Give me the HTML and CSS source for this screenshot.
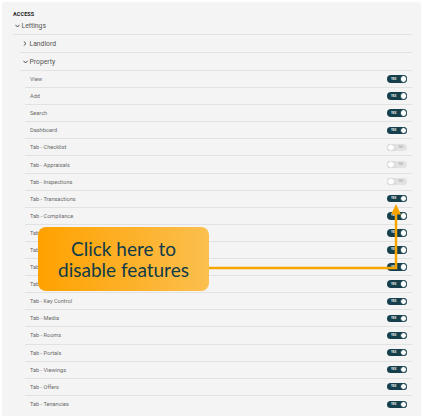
FILE: index.html
```html
<!DOCTYPE html>
<html>
<head>
<meta charset="utf-8">
<link rel="stylesheet" href="styles.css">
</head>
<body>
<div class="panel">
  <div class="section-title">ACCESS</div>
  <div class="group-row level0">
    <svg class="chev" viewBox="0 0 6 4"><polyline points="0.5,0.5 3,3.2 5.5,0.5"/></svg>
    <span>Lettings</span>
  </div>
  <div class="children">
    <div class="group-row level1">
      <svg class="chev right" viewBox="0 0 4 6"><polyline points="0.5,0.5 3.2,3 0.5,5.5"/></svg>
      <span>Landlord</span>
    </div>
    <div class="group-row level1">
      <svg class="chev" viewBox="0 0 6 4"><polyline points="0.5,0.5 3,3.2 5.5,0.5"/></svg>
      <span>Property</span>
    </div>
    <div class="items">
      <div class="item"><span>View</span><span class="toggle on"><i>YES</i><b></b></span></div>
      <div class="item"><span>Add</span><span class="toggle on"><i>YES</i><b></b></span></div>
      <div class="item"><span>Search</span><span class="toggle on"><i>YES</i><b></b></span></div>
      <div class="item"><span>Dashboard</span><span class="toggle on"><i>YES</i><b></b></span></div>
      <div class="item"><span>Tab - Checklist</span><span class="toggle off"><b></b><i>NO</i></span></div>
      <div class="item"><span>Tab - Appraisals</span><span class="toggle off"><b></b><i>NO</i></span></div>
      <div class="item"><span>Tab - Inspections</span><span class="toggle off"><b></b><i>NO</i></span></div>
      <div class="item"><span>Tab - Transactions</span><span class="toggle on"><i>YES</i><b></b></span></div>
      <div class="item"><span>Tab - Compliance</span><span class="toggle on"><i>YES</i><b></b></span></div>
      <div class="item"><span>Tab - Marketing</span><span class="toggle on"><i>YES</i><b></b></span></div>
      <div class="item"><span>Tab - Documents</span><span class="toggle on"><i>YES</i><b></b></span></div>
      <div class="item"><span>Tab - Applicants</span><span class="toggle on"><i>YES</i><b></b></span></div>
      <div class="item"><span>Tab - Valuations</span><span class="toggle on"><i>YES</i><b></b></span></div>
      <div class="item"><span>Tab - Key Control</span><span class="toggle on"><i>YES</i><b></b></span></div>
      <div class="item"><span>Tab - Media</span><span class="toggle on"><i>YES</i><b></b></span></div>
      <div class="item"><span>Tab - Rooms</span><span class="toggle on"><i>YES</i><b></b></span></div>
      <div class="item"><span>Tab - Portals</span><span class="toggle on"><i>YES</i><b></b></span></div>
      <div class="item"><span>Tab - Viewings</span><span class="toggle on"><i>YES</i><b></b></span></div>
      <div class="item"><span>Tab - Offers</span><span class="toggle on"><i>YES</i><b></b></span></div>
      <div class="item"><span>Tab - Tenancies</span><span class="toggle on"><i>YES</i><b></b></span></div>
    </div>
  </div>
</div>

<svg class="arrow" viewBox="0 0 425 416" width="425" height="416">
  <polyline points="208,268 396,268 396,212" />
  <polygon points="391,214.5 401,214.5 396,204" />
</svg>

<div class="callout">Click here to<br>disable features</div>
</body>
</html>
```

FILE: styles.css
```css
html, body {
  margin: 0;
  padding: 0;
  background: #ffffff;
  width: 425px;
  height: 416px;
  overflow: hidden;
  font-family: Roboto, "Liberation Sans", sans-serif;
}

.panel {
  margin: 3px 0 0 3px;
  width: 417px;
  height: 420px;
  box-sizing: border-box;
  background: #f4f4f4;
  padding: 8px 8px 0 10px;
  box-shadow: 0 0 2px rgba(0, 0, 0, 0.12);
}

.section-title {
  font-size: 5.5px;
  font-weight: 700;
  color: #222;
  line-height: 6px;
  height: 6px;
  letter-spacing: 0.1px;
}

.group-row {
  display: flex;
  align-items: center;
  gap: 1.5px;
  height: 18px;
  box-sizing: border-box;
  border-bottom: 1px solid #e2e2e2;
  font-size: 6.8px;
  color: #555;
}

.group-row.level0 {
  padding-left: 2px;
}

.children {
  margin-left: 7px;
}

.group-row.level1 {
  padding-left: 3px;
}

.chev {
  width: 5px;
  height: 4px;
  fill: none;
  stroke: #333;
  stroke-width: 1;
}

.chev.right {
  width: 4px;
  height: 5px;
  margin-right: 1px;
}

.items {
  margin-left: 5px;
}

.item {
  display: flex;
  align-items: center;
  justify-content: space-between;
  height: 17.1px;
  box-sizing: border-box;
  border-bottom: 1px solid #e2e2e2;
  padding: 0 5px 0 5px;
  font-size: 5.6px;
  color: #6a6a6a;
}

.item:last-child {
  border-bottom: none;
}

.toggle {
  display: flex;
  align-items: center;
  justify-content: space-between;
  width: 20px;
  height: 7.5px;
  border-radius: 4px;
  box-sizing: border-box;
}

.toggle i {
  font-style: normal;
  font-size: 3px;
  font-weight: 700;
  line-height: 3px;
}

.toggle b {
  display: block;
  width: 7.5px;
  height: 7.5px;
  border-radius: 50%;
  background: #fff;
  box-sizing: border-box;
}

.toggle.on {
  background: #143f4b;
  padding-left: 4px;
}

.toggle.on i {
  color: #e8eef0;
}

.toggle.on b {
  border: 1px solid #143f4b;
}

.toggle.off {
  background: #e2e2e2;
  padding-right: 4px;
}

.toggle.off i {
  color: #b5b5b5;
}

.toggle.off b {
  border: 0.6px solid #e0e0e0;
  box-shadow: 0 0 1px rgba(0,0,0,0.15);
}

.arrow {
  position: absolute;
  left: 0;
  top: 0;
  pointer-events: none;
}

.arrow polyline {
  fill: none;
  stroke: #f7a600;
  stroke-width: 2.5;
}

.arrow polygon {
  fill: #f7a600;
}

.callout {
  position: absolute;
  left: 38px;
  top: 227px;
  width: 171px;
  height: 64px;
  box-sizing: border-box;
  border-radius: 8px;
  background: linear-gradient(90deg, #ffa200 0%, #fdb12a 55%, #fbc04f 100%);
  color: #0e3b4a;
  font-family: Lato, "Open Sans", sans-serif;
  font-size: 19px;
  line-height: 21px;
  text-align: center;
  padding-top: 11px;
}
```
